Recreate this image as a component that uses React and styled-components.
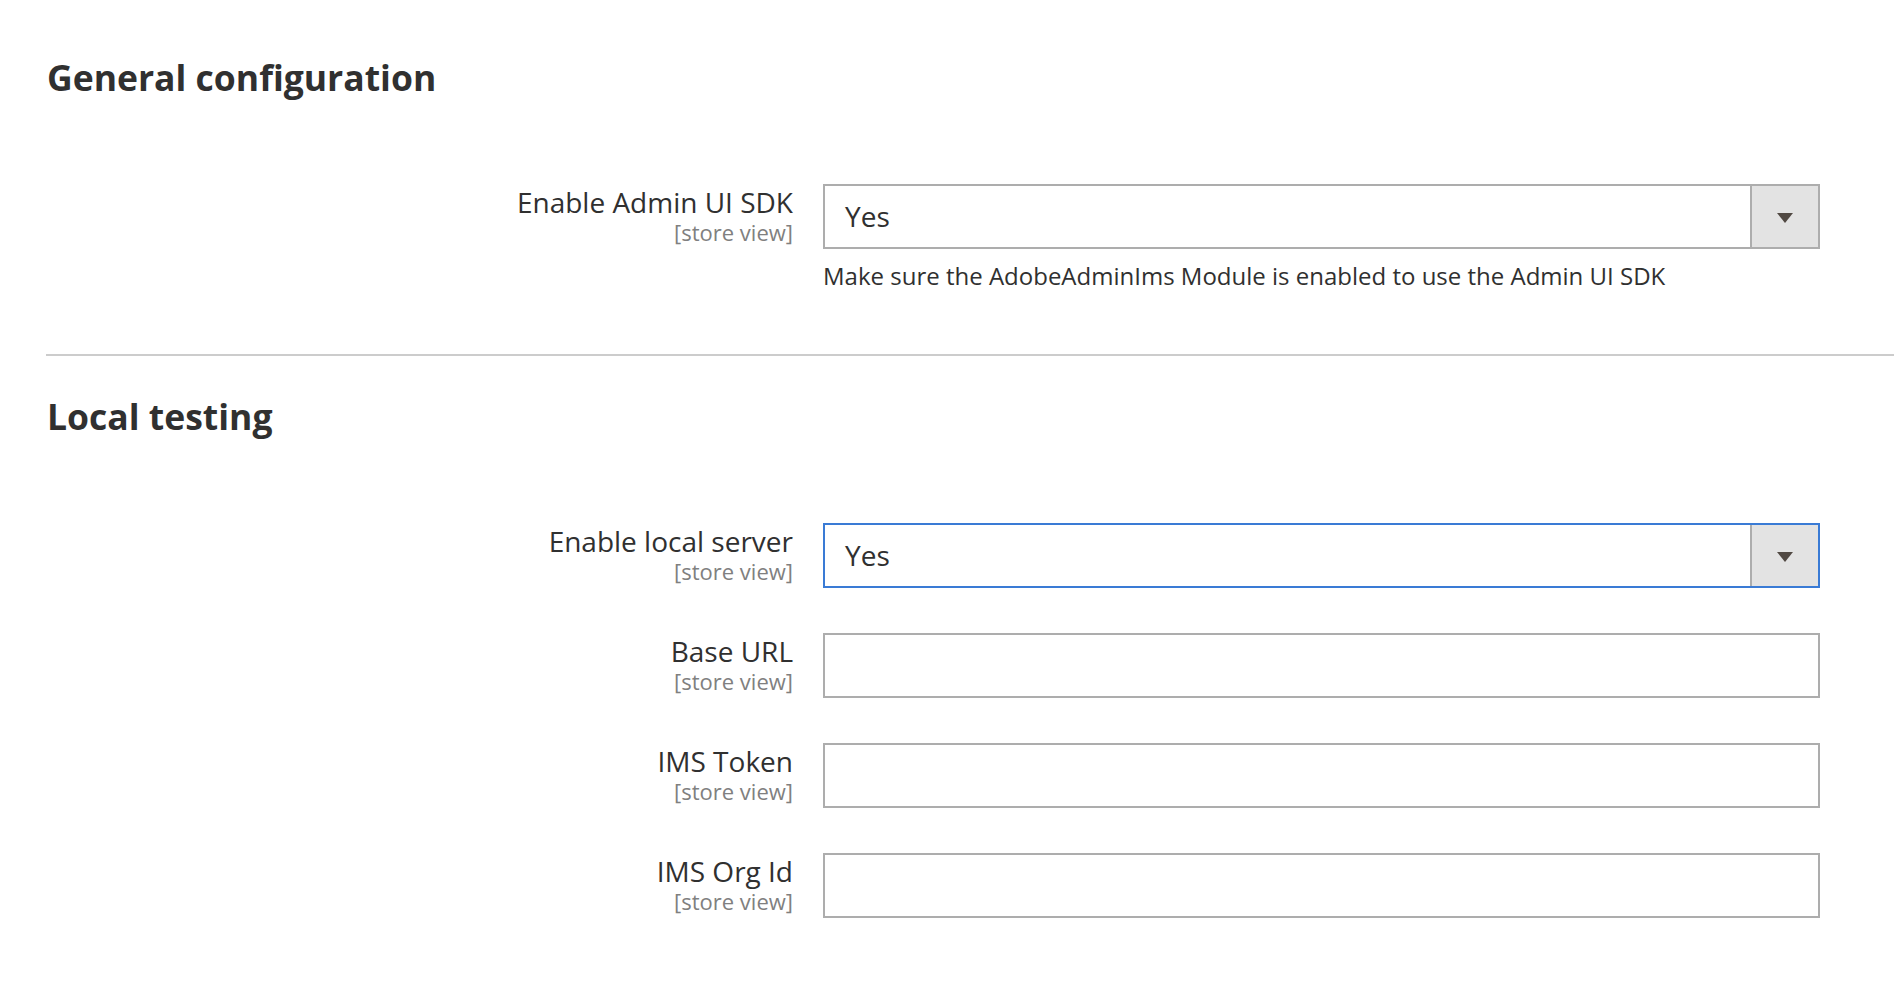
import React from 'react';
import styled, { createGlobalStyle } from 'styled-components';

const GlobalStyle = createGlobalStyle`
  html, body {
    margin: 0;
    padding: 0;
    background: #ffffff;
  }
  body {
    font-family: "Open Sans", "Noto Sans", sans-serif;
    color: #303030;
  }
`;

const Page = styled.div`
  width: 1894px;
  min-height: 1004px;
  background: #ffffff;
`;

const Section = styled.section`
  margin-left: 46px;
  padding-top: ${props => props.$top}px;
  padding-bottom: ${props => props.$bottom}px;
  border-top: ${props => (props.$divided ? '2px solid #cccccc' : 'none')};
`;

const SectionTitle = styled.h2`
  margin: 0 0 87px 1px;
  font-size: 35.5px;
  line-height: 40px;
  font-weight: 700;
  color: #303030;
`;

const Rows = styled.div`
  display: flex;
  flex-direction: column;
  gap: 45px;
`;

const Row = styled.div`
  display: grid;
  grid-template-columns: 747px 997px;
  column-gap: 30px;
  align-items: start;
`;

const LabelCell = styled.div`
  display: flex;
  flex-direction: column;
  align-items: flex-end;
  text-align: right;
`;

const LabelText = styled.span`
  font-size: 28px;
  line-height: 36px;
  color: #303030;
`;

const Scope = styled.span`
  font-size: 22px;
  line-height: 26px;
  margin-top: -1px;
  color: #808080;
`;

const FieldCell = styled.div`
  display: flex;
  flex-direction: column;
`;

const SelectBox = styled.div`
  box-sizing: border-box;
  height: 65px;
  display: flex;
  align-items: stretch;
  border: 2px solid ${props => (props.$focused ? '#3a7bd5' : '#adadad')};
  background: #ffffff;
`;

const SelectValue = styled.div`
  flex: 1;
  display: flex;
  align-items: center;
  padding: 0 0 2px 20px;
  font-size: 28px;
  color: #303030;
`;

const SelectButton = styled.div`
  width: 66px;
  border-left: 2px solid #adadad;
  background: #e3e3e3;
  display: flex;
  align-items: center;
  justify-content: center;
`;

const Arrow = styled.span`
  width: 0;
  height: 0;
  margin-top: 3px;
  border-left: 8px solid transparent;
  border-right: 8px solid transparent;
  border-top: 10px solid #514943;
`;

const TextInput = styled.input`
  box-sizing: border-box;
  height: 65px;
  width: 100%;
  border: 2px solid #adadad;
  border-radius: 0;
  padding: 0 20px;
  font-family: "Open Sans", "Noto Sans", sans-serif;
  font-size: 28px;
  color: #303030;
  background: #ffffff;
  outline: none;
`;

const Note = styled.div`
  margin-top: 13px;
  font-size: 24px;
  line-height: 28px;
  color: #303030;
`;

const Select = ({ value, focused }) => (
  <SelectBox $focused={focused}>
    <SelectValue>{value}</SelectValue>
    <SelectButton>
      <Arrow />
    </SelectButton>
  </SelectBox>
);

const Field = ({ label, children }) => (
  <Row>
    <LabelCell>
      <LabelText>{label}</LabelText>
      <Scope>[store view]</Scope>
    </LabelCell>
    <FieldCell>{children}</FieldCell>
  </Row>
);

const App = () => (
  <Page>
    <GlobalStyle />
    <Section $top={57} $bottom={64}>
      <SectionTitle>General configuration</SectionTitle>
      <Rows>
        <Field label="Enable Admin UI SDK">
          <Select value="Yes" />
          <Note>Make sure the AdobeAdminIms Module is enabled to use the Admin UI SDK</Note>
        </Field>
      </Rows>
    </Section>
    <Section $divided $top={40} $bottom={86}>
      <SectionTitle>Local testing</SectionTitle>
      <Rows>
        <Field label="Enable local server">
          <Select value="Yes" focused />
        </Field>
        <Field label="Base URL">
          <TextInput type="text" />
        </Field>
        <Field label="IMS Token">
          <TextInput type="text" />
        </Field>
        <Field label="IMS Org Id">
          <TextInput type="text" />
        </Field>
      </Rows>
    </Section>
  </Page>
);

export default App;
